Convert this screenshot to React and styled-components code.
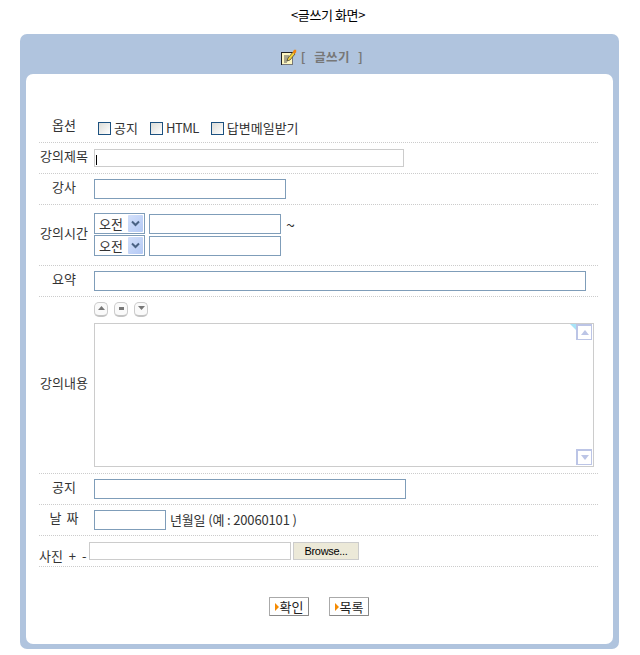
import React from "react";
import styled, { createGlobalStyle } from "styled-components";

const Global = createGlobalStyle`
  html, body { margin: 0; padding: 0; background: #fff; }
  body { font: 13px/14px "Noto Sans CJK KR", sans-serif; color: #333; }
  * { box-sizing: border-box; }
`;
const Page = styled.div`
  width: 640px;
  height: 655px;
  padding: 8px 21px 0 20px;
  overflow: hidden;
`;
const Heading = styled.h1`
  margin: 0 0 12px;
  height: 14px;
  padding-left: 17px;
  font: 13px/14px "Noto Sans CJK KR", sans-serif;
  letter-spacing: -0.4px;
  color: #000;
  text-align: center;
`;
const Panel = styled.section`
  height: 615px;
  padding: 0 6px 5px;
  background: #b0c4de;
  border-radius: 7px;
  display: flex;
  flex-direction: column;
`;
const PanelTitle = styled.div`
  height: 40px;
  padding: 6px 0 0 5px;
  display: flex;
  align-items: center;
  justify-content: center;
  gap: 4px;
  font-weight: 700;
  font-size: 12.5px;
  color: #777;
`;
const TitleText = styled.span`
  word-spacing: 5px;
  letter-spacing: 0.4px;
`;
const Card = styled.div`
  flex: 1;
  padding: 38px 15px 0 13px;
  background: #fff;
  border-radius: 7px;
`;
const Row = styled.div`
  height: ${(p) => p.$h || 31}px;
  display: flex;
  align-items: ${(p) => (p.$top ? "flex-start" : "center")};
  border-bottom: 1px dotted #ccc;
`;
const Label = styled.label`
  flex: 0 0 50px;
  margin-right: 5px;
  padding-bottom: 5px;
  text-align: center;
  white-space: nowrap;
  word-spacing: ${(p) => p.$ws || 0}px;
`;
const PhotoLabel = styled.label`
  flex: 0 0 50px;
  padding-top: 10px;
  white-space: nowrap;
  word-spacing: 3px;
`;
const EditorLabel = styled(Label)`
  align-self: center;
`;
const Options = styled.div`
  display: flex;
  align-items: center;
  padding: 2px 0 0 4px;
`;
const Option = styled.span`
  display: inline-flex;
  align-items: center;
  gap: 3px;
  margin-right: 12px;
  letter-spacing: ${(p) => (p.$tight ? "-0.5px" : "0")};
`;
const Check = styled.input.attrs({ type: "checkbox" })`
  appearance: none;
  width: 13px;
  height: 13px;
  margin: 0;
  border: 1px solid #1c5180;
  background: linear-gradient(135deg, #dcdcd7, #fff);
`;
const Field = styled.input.attrs({ type: "text" })`
  display: block;
  width: ${(p) => p.$w}px;
  height: 20px;
  margin: 0;
  padding: 0 2px;
  background: #fff;
  border: 1px solid #7f9db9;
  outline: none;
`;
const CaretWrap = styled.span`
  position: relative;
  display: block;
  &::after {
    content: "";
    position: absolute;
    left: 2px;
    top: 6px;
    width: 1px;
    height: 10px;
    background: #000;
  }
`;
const GrayField = styled(Field)`
  height: 18px;
  border-color: #ccc;
`;
const TimeStack = styled.div`
  display: flex;
  flex-direction: column;
  gap: 1px;
`;
const TimeLine = styled.div`
  display: flex;
  align-items: flex-end;
  gap: 4px;
`;
const Select = styled.div`
  width: 51px;
  height: 21px;
  padding: 1px 1px 1px 4px;
  display: flex;
  align-items: center;
  justify-content: space-between;
  border: 1px solid #7f9db9;
  background: #fff;
`;
const Arrow = styled.span`
  width: 15px;
  height: 17px;
  display: flex;
  align-items: center;
  justify-content: center;
  background: linear-gradient(135deg, #d3e0fa, #b4c9f5);
  border-radius: 1px;
`;
const Tilde = styled.span`
  align-self: flex-start;
  margin: 4px 0 0 5px;
  font-size: 16px;
`;
const TimeWrap = styled.div`
  display: flex;
  padding-bottom: 1px;
`;
const Editor = styled.div`
  padding-top: 5px;
`;
const SizeButtons = styled.div`
  display: flex;
  gap: 6px;
  height: 15px;
  margin-bottom: 6px;
`;
const SizeButton = styled.button`
  width: 14px;
  height: 15px;
  padding: 0 0 2px;
  display: flex;
  align-items: center;
  justify-content: center;
  background: #fafafa;
  border: 1px solid #ccc;
  border-bottom: 2px solid #c4c4c4;
  border-radius: 5px;
`;
const Dash = styled.span`
  width: 5px;
  height: 3px;
  background: #777;
`;
const AreaWrap = styled.div`
  position: relative;
  width: 500px;
  height: 144px;
`;
const Area = styled.textarea`
  display: block;
  width: 100%;
  height: 100%;
  margin: 0;
  padding: 2px;
  border: 1px solid #ccc;
  background: #fff;
  resize: none;
  outline: none;
`;
const Corner = styled.span`
  position: absolute;
  top: 1px;
  right: 18px;
  width: 0;
  height: 0;
  border-top: 6px solid #a8e4f8;
  border-left: 6px solid transparent;
`;
const Scroll = styled.span`
  position: absolute;
  right: 2px;
  ${(p) => (p.$down ? "bottom: 2px;" : "top: 1px;")}
  width: 16px;
  height: 16px;
  display: flex;
  align-items: center;
  justify-content: center;
  background: #fff;
  border: 1px solid #bcc5e6;
  border-width: 2px 1px 1px 2px;
`;
const DateHint = styled.span`
  margin-left: 4px;
  letter-spacing: -0.15px;
`;
const FileLine = styled.div`
  display: flex;
  gap: 2px;
`;
const Browse = styled.button`
  width: 66px;
  height: 18px;
  margin: 0;
  padding: 0;
  background: #ece9d8;
  border: 1px solid #ccc;
  font: 11px/14px "Liberation Sans", sans-serif;
  letter-spacing: -0.3px;
  color: #000;
`;
const Actions = styled.div`
  margin-top: 30px;
  display: flex;
  justify-content: center;
  gap: 20px;
`;
const Action = styled.button`
  width: 40px;
  height: 19px;
  margin: 0;
  padding: 0 0 0 5px;
  display: flex;
  align-items: center;
  gap: 1px;
  background: #fff;
  border: 1px solid #aaa;
  border-right-color: #888;
  border-bottom-color: #888;
  border-radius: 1px;
  font: 13px/14px "Noto Sans CJK KR", sans-serif;
  color: #222;
`;
const Marker = styled.span`
  width: 0;
  height: 0;
  border-left: 4px solid #f58a00;
  border-top: 4px solid transparent;
  border-bottom: 4px solid transparent;
`;

const NoteIcon = () => (
  <svg width="16" height="16" viewBox="0 0 16 16">
    <rect x="0.5" y="3.5" width="11" height="12" fill="#fdf6c0" stroke="#222" />
    <path d="M11 4h1v12H1v-1h10z" fill="#777" />
    <path d="M3 7h5M3 9h5M3 11h4M3 13h3" stroke="#555" />
    <path d="M6 12l1-3 5-6 2 2-5 6z" fill="#f3d23c" stroke="#333" strokeWidth=".7" />
    <path d="M11.5 3.5L13 0.8h2.2v2.4L13.5 5z" fill="#ef8510" />
  </svg>
);
const Chevron = () => (
  <svg width="9" height="7" viewBox="0 0 9 7">
    <path d="M1 1.5l3.5 3.5L8 1.5" fill="none" stroke="#4a6284" strokeWidth="2" />
  </svg>
);
const Triangle = ({ down, color, w = 7, h = 4 }) => (
  <svg width={w} height={h} viewBox="0 0 7 4" preserveAspectRatio="none">
    <path d={down ? "M0 0h7L3.5 4z" : "M3.5 0L7 4H0z"} fill={color} />
  </svg>
);
const TimeInput = () => (
  <TimeLine>
    <Select>
      오전
      <Arrow>
        <Chevron />
      </Arrow>
    </Select>
    <Field $w={132} />
  </TimeLine>
);

export default function App() {
  return (
    <Page>
      <Global />
      <Heading>&lt;글쓰기 화면&gt;</Heading>
      <Panel>
        <PanelTitle>
          <NoteIcon />
          <TitleText>[ 글쓰기 ]</TitleText>
        </PanelTitle>
        <Card>
          <Row>
            <Label>옵션</Label>
            <Options>
              <Option>
                <Check />
                공지
              </Option>
              <Option $tight>
                <Check />
                HTML
              </Option>
              <Option>
                <Check />
                답변메일받기
              </Option>
            </Options>
          </Row>
          <Row>
            <Label>강의제목</Label>
            <CaretWrap>
              <GrayField $w={310} />
            </CaretWrap>
          </Row>
          <Row>
            <Label>강사</Label>
            <Field $w={192} />
          </Row>
          <Row $h={61}>
            <Label>강의시간</Label>
            <TimeWrap>
              <TimeStack>
                <TimeInput />
                <TimeInput />
              </TimeStack>
              <Tilde>~</Tilde>
            </TimeWrap>
          </Row>
          <Row>
            <Label>요약</Label>
            <Field $w={492} />
          </Row>
          <Row $h={177} $top>
            <EditorLabel>강의내용</EditorLabel>
            <Editor>
              <SizeButtons>
                <SizeButton aria-label="up">
                  <Triangle color="#777" />
                </SizeButton>
                <SizeButton aria-label="reset">
                  <Dash />
                </SizeButton>
                <SizeButton aria-label="down">
                  <Triangle down color="#777" />
                </SizeButton>
              </SizeButtons>
              <AreaWrap>
                <Area />
                <Corner />
                <Scroll>
                  <Triangle color="#bcc5e6" w={8} h={5} />
                </Scroll>
                <Scroll $down>
                  <Triangle down color="#bcc5e6" w={8} h={5} />
                </Scroll>
              </AreaWrap>
            </Editor>
          </Row>
          <Row>
            <Label>공지</Label>
            <Field $w={312} />
          </Row>
          <Row>
            <Label $ws={2}>날 짜</Label>
            <Field $w={72} />
            <DateHint>년월일 (예 : 20060101 )</DateHint>
          </Row>
          <Row>
            <PhotoLabel>사진 + -</PhotoLabel>
            <FileLine>
              <GrayField $w={202} />
              <Browse>Browse...</Browse>
            </FileLine>
          </Row>
          <Actions>
            <Action>
              <Marker />
              확인
            </Action>
            <Action>
              <Marker />
              목록
            </Action>
          </Actions>
        </Card>
      </Panel>
    </Page>
  );
}
